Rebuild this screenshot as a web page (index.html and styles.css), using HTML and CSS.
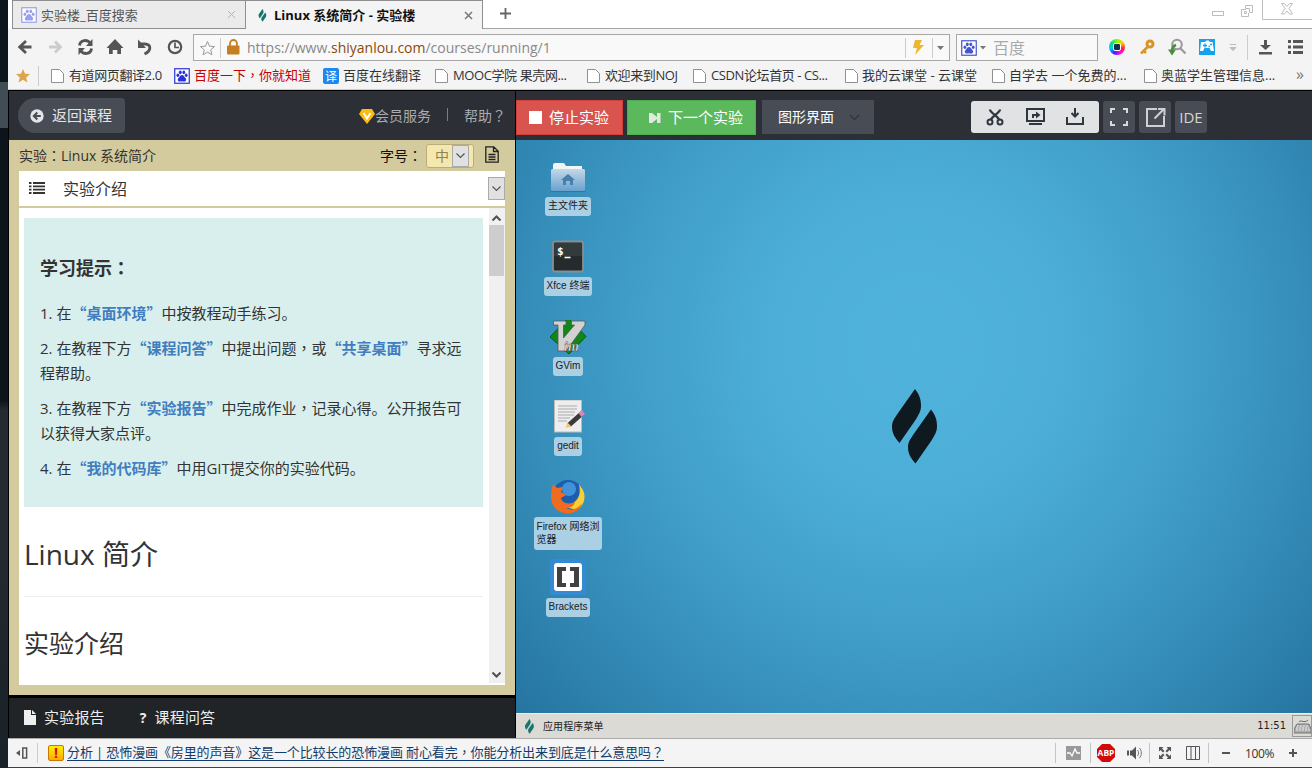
FILE: index.html
```
<!DOCTYPE html>
<html lang="zh-CN">
<head>
<meta charset="utf-8">
<title>Linux 系统简介 - 实验楼</title>
<link rel="stylesheet" href="styles.css">
</head>
<body>
<svg class="defs" width="0" height="0">
  <symbol id="paw" viewBox="0 0 16 16"><rect x=".75" y=".75" width="14.5" height="14.5" fill="#fff" stroke="currentColor" stroke-width="1.2"/><g fill="currentColor"><ellipse cx="3.9" cy="7.3" rx="1.4" ry="1.8"/><ellipse cx="6.3" cy="4.3" rx="1.4" ry="1.9"/><ellipse cx="9.8" cy="4.3" rx="1.4" ry="1.9"/><ellipse cx="12.2" cy="7.3" rx="1.4" ry="1.8"/><path d="M8 7c1.700 0 2.200 1.800 3.400 2.900 1.500 1.400.7 3.600-1.200 3.600-.9 0-1.300-.3-2.200-.3s-1.300.3-2.200.3c-1.900 0-2.700-2.200-1.200-3.600C5.800 8.800 6.300 7 8 7z"/></g></symbol>
  <symbol id="page" viewBox="0 0 13 14"><path d="M.5.500h8l4 4v9H.5z" fill="#fff" stroke="#8f8f8f"/></symbol>
  <symbol id="leaf" viewBox="0 0 46 76"><path id="blade" d="M23 0C27 5 29 10 29 17C29 22 27 25 23.500 31L7.500 54C3 49 0 44 0 38C0 33 1.500 31 5 25.500z"/><use href="#blade" x="16" y="20.500"/></symbol>
</svg>
<div class="screen">
  <div class="edge"></div>
  <div class="browser">
    <div class="tabs">
      <div class="tab"><svg class="i16 pale"><use href="#paw"/></svg><span class="tabname">实验楼_百度搜索</span><svg class="x" viewBox="0 0 9 9"><path d="M1 1l7 7M8 1L1 8" stroke="#b5b5b5"/></svg></div>
      <div class="tab active"><svg class="tleaf"><use href="#leaf"/></svg><b class="tabname">Linux 系统简介 - 实验楼</b><svg class="x" viewBox="0 0 9 9"><path d="M1 1l7 7M8 1L1 8" stroke="#777" stroke-width="1.500"/></svg></div>
      <div class="rest"><svg class="plus" viewBox="0 0 11 11"><path d="M5.500 0v11M0 5.500h11" stroke="#666" stroke-width="1.800"/></svg>
        <svg class="winbtns" viewBox="0 0 100 20"><g fill="none" stroke="#bdbdbd"><rect x=".5" y="11.500" width="11" height="4"/><path d="M34 9.500h-4.500v7h7V13M33.500 5.500h7v7h-3v-4h-4zM32.500 11.500h2v2h-2zM50.500 0v19.500H100"/><path d="M69.500 3.500h3l2.500 3 2.500-3h3L77 8.500l3.500 5.500h-3L75 11l-2.500 3h-3L73 8.500z"/></g></svg>
      </div>
    </div>
    <div class="nav">
      <svg class="navicons" viewBox="0 0 180 34" fill="none" stroke="#555" stroke-width="2.800"><path d="M11.500 20h12M18 14l-6.300 6 6.300 6"/><path d="M41 20h11M47 14.500l5.500 5.500-5.500 5.500" stroke="#ccc"/><path d="M71.500 18.500c.6-6 8-6.500 11-2M83.500 21.500c-.6 6-8 6.500-11 2" /><path d="M84.500 12v7H78zM70.500 28v-7H77z" fill="#555" stroke="none"/><path d="M107 12l8.500 9h-2.500v6h-3.700v-4h-4.600v4H101v-6h-2.500z" fill="#555" stroke="none"/><path d="M132 17h5c6.500 0 6.500 7-.5 10" stroke-width="2.900"/><path d="M130 12.500v8.500h8z" fill="#555" stroke="none"/><circle cx="167" cy="20" r="6.200" stroke-width="2.200"/><path d="M167 15.500v5h4" stroke-width="1.700"/></svg>
      <div class="url">
        <svg viewBox="0 0 50 26" class="urllead"><path d="M13.500 6.500l2 4.700 5 .4-3.800 3.300 1.200 4.900-4.400-2.600-4.400 2.600 1.200-4.900-3.800-3.300 5-.4z" fill="none" stroke="#999"/><path d="M26.500 3v20" stroke="#ccc"/><path d="M36 11V8.500a3.500 3.500 0 017 0V11" fill="none" stroke="#c67f20" stroke-width="1.800"/><rect x="33" y="10.500" width="12.500" height="9" rx="1" fill="#c67f20"/></svg>
        <span class="addr">https://www.<em>shiyanlou.com</em>/courses/running/1</span>
        <svg viewBox="0 0 44 26" class="urlend"><path d="M.5 3v20M27.500 3v20" stroke="#ccc"/><path d="M10 5h7l-2.500 5H19L10 20l2-7H8z" fill="#edb62e"/><path d="M32 11h7l-3.500 4z" fill="#777"/></svg>
      </div>
      <div class="search"><svg class="i16 blue"><use href="#paw"/></svg><svg class="caret" viewBox="0 0 7 4"><path d="M0 0h6L3 3.500z" fill="#777"/></svg><span>百度</span></div>
      <div class="wheel"><i></i></div>
      <svg class="tools" viewBox="0 0 180 34"><g transform="translate(8 11)"><circle cx="11" cy="5" r="3" fill="none" stroke="#dc9227" stroke-width="3"/><path d="M8.500 8L2 14.500M5 12l2 2" stroke="#dc9227" stroke-width="2.500"/></g><g fill="none"><circle cx="46" cy="16.500" r="4.800" stroke="#999" stroke-width="2"/><path d="M49 20l5.500 5.500" stroke="#999" stroke-width="2.300"/><path d="M45 17c-3 1-4 4-4 6" stroke="#478f38" stroke-width="2.600"/><path d="M37 21.500h8l-4 6z" fill="#478f38"/></g><rect x="68" y="11" width="16" height="16" fill="#15a2ed"/><path d="M71 14h3l1.500-1.500h2L79 14h2.500l1.500 9h-3l-1.500-3h-5L72 23h-3l1-9z" fill="#fff"/><path d="M72 17.500h4M74 15.500v4M79 16.500h2M77.500 18.500h1.500" stroke="#15a2ed" stroke-width="1.300"/><path d="M99 16.500h6M99 19.500h6l-3 3z" stroke="#bbb" fill="#bbb"/><path d="M116.500 7v25" stroke="#ccc"/><g transform="translate(127 12)" fill="#555"><path d="M6 0h3v5h4l-5.500 5L2 5h4zM1 12h13v2.500H1z"/></g><path d="M157 13.500h3m2 0h10M157 19h3m2 0h10M157 24.500h3m2 0h10" stroke="#555" stroke-width="2.800"/></svg>
    </div>
    <div class="marks">
      <svg class="fav" viewBox="0 0 14 14"><path d="M7 0l2 4.700 5 .4-3.800 3.300 1.200 5L7 10.800l-4.400 2.600 1.200-5L0 5.100l5-.4z" fill="#dda54b"/></svg><i class="sep"></i>
      <div class="bm" style="width:123px"><svg class="pg"><use href="#page"/></svg><span class="tight">有道网页翻译2.0</span></div>
      <div class="bm red" style="width:149px"><svg class="i16 paw2"><use href="#paw"/></svg><span>百度一下<u>，</u>你就知道</span></div>
      <div class="bm" style="width:112px"><b class="yi">译</b><span>百度在线翻译</span></div>
      <div class="bm" style="width:152px"><svg class="pg"><use href="#page"/></svg><span class="tight">MOOC学院 果壳网...</span></div>
      <div class="bm" style="width:106px"><svg class="pg"><use href="#page"/></svg><span class="tight">欢迎来到NOJ</span></div>
      <div class="bm" style="width:152px"><svg class="pg"><use href="#page"/></svg><span class="tight">CSDN论坛首页 - CS...</span></div>
      <div class="bm" style="width:147px"><svg class="pg"><use href="#page"/></svg><span>我的云课堂 - 云课堂</span></div>
      <div class="bm" style="width:152px"><svg class="pg"><use href="#page"/></svg><span>自学去 一个免费的...</span></div>
      <div class="bm" style="width:151px"><svg class="pg"><use href="#page"/></svg><span>奥蓝学生管理信息...</span></div>
      <span class="more">»</span>
    </div>
    <div class="app">
      <div class="left">
        <div class="head">
          <div class="back"><svg viewBox="0 0 14 14"><circle cx="7" cy="7" r="6.700" fill="#e4e5e6"/><path d="M10.800 7H4M7.300 3.500L3.800 7l3.500 3.500" fill="none" stroke="#484d55" stroke-width="2"/></svg><span>返回课程</span></div>
          <div class="links"><svg viewBox="0 0 16 15"><path d="M3 0h10l3 5-8 10L0 5z" fill="#fdbb12"/><path d="M4.500 4L8 9.500 11.500 4" fill="none" stroke="#fff" stroke-width="2"/></svg><span>会员服务</span><i></i><span>帮助<u>？</u></span></div>
        </div>
        <div class="lesson">
          <div class="title"><span>实验<u>：</u>Linux 系统简介</span><span class="fs">字号<u>：</u></span><div class="size"><span>中</span><i class="drop"><svg viewBox="0 0 9 6"><path d="M.5.500l4 4 4-4" fill="none" stroke="#555" stroke-width="1.200"/></svg></i></div><svg class="doc" viewBox="0 0 14 17"><path d="M.8.800h8l4.400 4.400v11H.8zM8.500 1v4.500H13M3.500 8.500h7M3.500 11h7M3.500 13.500h7" fill="none" stroke="#222" stroke-width="1.300"/></svg></div>
          <div class="section"><svg class="list" viewBox="0 0 16 12"><path d="M0 1h2.500M4 1h12M0 4.300h2.500M4 4.300h12M0 7.600h2.500M4 7.600h12M0 11h2.500M4 11h12" stroke="#333" stroke-width="1.800"/></svg><span>实验介绍</span><i class="drop big"><svg viewBox="0 0 9 6"><path d="M.5.500l4 4 4-4" fill="none" stroke="#555" stroke-width="1.200"/></svg></i></div>
          <div class="doc-body">
            <div class="article">
              <div class="tips">
                <h4>学习提示<u>：</u></h4>
                <p>1. 在<b>“桌面环境”</b>中按教程动手练习。</p>
                <p>2. 在教程下方<b>“课程问答”</b>中提出问题<u>，</u>或<b>“共享桌面”</b>寻求远<br>程帮助。</p>
                <p>3. 在教程下方<b>“实验报告”</b>中完成作业<u>，</u>记录心得。公开报告可<br>以获得大家点评。</p>
                <p>4. 在<b>“我的代码库”</b>中用GIT提交你的实验代码。</p>
              </div>
              <h1>Linux 简介</h1>
              <h2>实验介绍</h2>
            </div>
            <div class="scroll"><svg viewBox="0 0 9 6"><path d="M.5 5.500l4-4 4 4" fill="none" stroke="#505050" stroke-width="2"/></svg><i></i><svg viewBox="0 0 9 6"><path d="M.5.500l4 4 4-4" fill="none" stroke="#505050" stroke-width="2"/></svg></div>
          </div>
        </div>
        <div class="foot"><svg viewBox="0 0 12 15"><path d="M0 0h7v5h5v10H0zM8 0l4 4H8z" fill="#eee"/></svg><span class="f1">实验报告</span><b>?</b><span>课程问答</span></div>
      </div>
      <div class="right">
        <div class="head">
          <div class="btn stop"><i></i><span>停止实验</span></div>
          <div class="btn next"><svg viewBox="0 0 12 12"><path d="M0 1h3l5 4V1h3.500v10H8V7l-5 4H0z" fill="#dfe9df"/></svg><span>下一个实验</span></div>
          <div class="btn ui"><span>图形界面</span><svg viewBox="0 0 11 7"><path d="M1 1l4.500 4.500L10 1" fill="none" stroke="#30343b" stroke-width="1.300"/></svg></div>
          <svg class="trio" viewBox="0 0 128 32" fill="none" stroke="#30363f" stroke-width="2"><g><path d="M19 8.500c0 3 7 6 9 10M29 8.500c0 3-7 6-9 10" stroke-width="2.300"/><circle cx="19" cy="21" r="2.500"/><circle cx="29" cy="21" r="2.500"/></g><rect x="56" y="8" width="17" height="12"/><path d="M58 23h13M62 17v-3h4"/><path d="M65 10.500v7l4.500-3.500z" fill="#30363f" stroke="none"/><path d="M96 16v7h16v-7M104 7v9M100.500 12l3.500 3.500 3.500-3.500"/></svg>
          <svg class="sq" viewBox="0 0 32 32" fill="none" stroke="#d8d9da" stroke-width="2"><path d="M8 12V8h4M20 8h4v4M24 20v4h-4M12 24H8v-4"/></svg>
          <svg class="sq" viewBox="0 0 32 32" fill="none" stroke="#cfd0d1" stroke-width="2"><path d="M18 8H8v17h17V15M15.500 17.500L25 8M19 8h6.500v6.500"/></svg>
          <div class="ide">IDE</div>
        </div>
        <div class="desktop">
          <div class="icons">
            <div class="it"><svg viewBox="0 0 38 36"><path d="M4 16V5q0-2 2-2h9l2 3h16v10z" fill="#f1f5f7"/><rect x="2" y="9" width="34" height="22" rx="1.500" fill="url(#fold)"/><path d="M2 31.500h34" stroke="#426f94"/><path d="M19 14l7 6h-2v5h-3v-4h-4v4h-3v-5h-2z" fill="#477fad"/><defs><linearGradient id="fold" x2="0" y2="1"><stop stop-color="#c4d8e7"/><stop offset="1" stop-color="#69a2cf"/></linearGradient></defs></svg><span>主文件夹</span></div>
            <div class="it"><svg viewBox="0 0 38 36"><rect x="4" y="1.500" width="30" height="30" rx="2" fill="#252a2c" stroke="#8a8e8f" stroke-width="1.800"/><path d="M5 3h28v13H5z" fill="#333a3c"/><text x="8" y="15" class="term">$</text><path d="M15.500 17.500h6" stroke="#fff" stroke-width="1.600"/></svg><span>Xfce 终端</span></div>
            <div class="it"><svg viewBox="0 0 38 36"><path d="M19-2l18 18.500L20 34 1 17z" fill="#118719" stroke="#075b12"/><path d="M4.500 1H17v4h-2.500v13L25.500 5H22.500V1H36v4L17 31H9V5H4.500z" fill="#d2d2d2" stroke="#555" stroke-width=".8"/><text x="15" y="31" class="vim">im</text></svg><span>GVim</span></div>
            <div class="it"><svg viewBox="0 0 38 36"><rect x="5.500" y="0" width="27" height="32" fill="#eee" stroke="#bbb"/><path d="M9 6h19M9 9h19M9 12h17M9 15h16M9 18h12M9 21h9" stroke="#aaa"/><path d="M20 25l14-12.500" stroke="#3b3b3b" stroke-width="5"/><path d="M16.500 28l2-5.500 4 4z" fill="#f1c66f"/><path d="M31 15l3.500-3" stroke="#d887b3" stroke-width="5"/></svg><span>gedit</span></div>
            <div class="it"><svg viewBox="0 0 38 36"><circle cx="19" cy="16" r="16" fill="#1d5dad"/><circle cx="20" cy="9" r="7" fill="#4093d8"/><path d="M30 4c2 10 0 15-6 19l-8 4 12 3c8-5 9-14 6-20z" fill="#f9cf36"/><path d="M3 8L4 4l4 4 6-1-2 5 5 3-5 3c1 5 7 7 14 4-1 5-6 6-9 6 6 3 12 1 16-5-2 7-8 10.500-14 10.500C8 33.500 2 25 2 17c0-4 0-6 1-9z" fill="#ee6b20"/></svg><span class="two">Firefox 网络浏<br>览器</span></div>
            <div class="it last"><svg viewBox="0 0 38 36"><rect x="1" y="0" width="36" height="36" rx="3" fill="#348bd4"/><rect x="5" y="4" width="28" height="28" rx="3" fill="#fff"/><path d="M17 8H8v20h9v-4h-4V12h4zM21 8h9v20h-9v-4h4V12h-4z" fill="#414141"/></svg><span>Brackets</span></div>
          </div>
          <svg class="logo"><use href="#leaf"/></svg>
        </div>
        <div class="taskbar"><svg><use href="#leaf"/></svg><span>应用程序菜单</span><time>11:51</time><div class="kb"><svg viewBox="0 0 17 15"><path d="M5 3c2-3 5 2 9-2" fill="none" stroke="#666"/><path d="M3 5h12l2 5v4H0v-4z" fill="#aaa" stroke="#777"/><path d="M3 7h12M2 9h13M2 11h14" stroke="#eee" stroke-dasharray="2 1"/></svg></div></div>
      </div>
    </div>
    <div class="status">
      <svg class="side" viewBox="0 0 12 12"><path d="M0 6l4-3v6z" fill="#555"/><rect x="6.800" y="1" width="3.800" height="10" fill="none" stroke="#555" stroke-width="1.500"/></svg><i class="sep"></i>
      <b class="warn">!</b><a>分析 | 恐怖漫画《房里的声音》这是一个比较长的恐怖漫画 耐心看完<u>，</u>你能分析出来到底是什么意思吗<u>？</u></a>
      <svg class="sticons" viewBox="0 0 190 28"><path d="M.5 4v20M35.500 4v20M94.500 4v20M153.500 4v20" stroke="#c4c4c4"/><rect x="11" y="7" width="15" height="14" fill="#999"/><path d="M12 14h3l2 3 3-7 2 4h3" fill="none" stroke="#fff" stroke-width="1.300"/><path d="M47 5h8l5 5v8l-5 5h-8l-5-5v-8z" fill="#d10b0b"/><text x="42.600" y="17" textLength="16.800" lengthAdjust="spacingAndGlyphs" class="abp">ABP</text><path d="M72 11.500h2v5h-2zM75 11.500h2l4-4v13l-4-4h-2z" fill="#555"/><path d="M82.500 11c1.500 2 1.500 4 0 6M84.500 9c2.500 3 2.500 7 0 10" fill="none" stroke="#777"/><path d="M104 8h4.500l-1.500 1.500 2.500 2.500-1.500 1.500-2.500-2.500-1.500 1.500zM116 8h-4.500l1.500 1.500-2.500 2.500 1.500 1.500 2.500-2.500 1.500 1.500zM104 20h4.500l-1.500-1.500 2.500-2.500-1.500-1.500-2.500 2.500-1.500-1.500zM116 20h-4.500l1.500-1.500-2.500-2.500 1.500-1.500 2.500 2.500 1.500-1.500z" fill="#555"/><path d="M131.500 7.500h13v13h-13zM136 8v12M140.500 8v12" fill="none" stroke="#555"/><path d="M167 14h8" stroke="#555" stroke-width="2"/></svg>
      <span class="zoom">100%</span><svg class="zp" viewBox="0 0 8 8"><path d="M4 0v8M0 4h8" stroke="#555" stroke-width="2"/></svg>
    </div>
  </div>
</div>
</body>
</html>
```
FILE: styles.css
```
* { box-sizing: border-box; }
body { margin: 0; overflow: hidden; font-family: "Open Sans", "Noto Sans CJK SC", sans-serif; color: #333; }
svg { display: block; flex: none; }
u { text-decoration: none; font-family: "Noto Sans CJK TC", sans-serif; font-feature-settings: "locl" 0; -webkit-locale: "zh-TW"; line-height: 0; }
.defs { position: absolute; }
.screen { display: flex; width: 1312px; height: 768px; background: #2a465f; }
.edge { width: 8px; background: linear-gradient(#0c161c 0 82px, #414d54 82px 128px, #0b151b 128px 400px, #232b31 410px 540px, #182127); }
.browser { width: 1304px; height: 767px; display: flex; flex-direction: column; background: #f4f4f4; white-space: nowrap; }
.i16 { width: 16px; height: 16px; }
.pale { color: #9ba0ed; }
.blue { color: #4355cf; }
.paw2 { color: #2932e1; }

.tabs { display: flex; height: 29px; background: #fff; }
.tab { display: flex; align-items: center; border: 1px solid #8f8f8f; border-left: 0; background: #ebebeb; font-size: 13px; width: 238px; padding: 0 9px 0 13px; color: #555; }
.tab:first-child { border-left: 1px solid #8f8f8f; margin-left: 4px; width: 234px; padding-left: 8px; }
.tab .tabname { flex: 1; margin: -1px 0 0 4px; }
.tab.active { background: #f4f4f4; border-bottom: 0; color: #111; width: 237px; padding-left: 11px; }
.tab.active .tabname { margin-left: 6px; letter-spacing: 0; }
.tleaf { width: 11px; height: 13px; fill: #18766e; }
.x { width: 9px; height: 9px; }
.rest { flex: 1; display: flex; justify-content: space-between; border-bottom: 1px solid #a5a5a5; }
.plus { width: 11px; height: 11px; margin: 8px 0 0 17px; }
.winbtns { width: 100px; height: 20px; }

.nav { display: flex; height: 34px; padding-top: 5px; }
.navicons { width: 180px; height: 34px; margin: -7px 5px 0 0; }
.url { display: flex; align-items: center; width: 757px; height: 27px; border: 1px solid #a8a8a8; background: #f9f9f9; }
.urllead { width: 50px; height: 26px; }
.addr { flex: 1; font-size: 14px; color: #888; margin: -1px 0 0 3px; }
.addr em { font-style: normal; color: #8a4a0c; }
.urlend { width: 44px; height: 26px; }
.search { display: flex; align-items: center; width: 142px; height: 27px; margin-left: 6px; padding-left: 4px; border: 1px solid #a8a8a8; background: #f9f9f9; color: #aaa; font-size: 16px; }
.search span { margin-top: -2px; }
.caret { width: 7px; height: 4px; margin: 0 6px 0 3px; }
.wheel { width: 16px; height: 16px; border-radius: 50%; margin: 5px 0 0 11px; padding: 4px; background: conic-gradient(#80ff00, #ffd000, #ff2040, #f0f, #4020ff, #0cf, #00e080, #80ff00); }
.wheel i { display: block; width: 8px; height: 8px; background: #183048; border: 1px solid #fff; border-radius: 2px; }
.tools { width: 180px; height: 34px; margin: -6px 0 0 6px; }

.marks { display: flex; align-items: center; height: 27px; padding-left: 8px; font-size: 13px; color: #333; border-bottom: 1px solid #c9c9c9; }
.fav { width: 14px; height: 14px; }
.sep { width: 1px; height: 20px; background: #ccc; margin: 0 12px 0 8px; }
.bm { display: flex; align-items: center; flex: none; gap: 5px; }
.bm span { margin: -3px 0 0 -1px; }
.pg { width: 13px; height: 14px; }
.bm .tight { letter-spacing: -.4px; margin-left: 0; }
.red { color: #c80000; }
.yi { width: 16px; height: 16px; background: #1e88f0; color: #fff; border-radius: 2px; font: 12px/16px "Noto Sans CJK SC", sans-serif; text-align: center; }
.more { font-size: 16px; color: #777; margin: -4px 0 0 1px; }

.app { display: flex; height: 648px; border-top: 1px solid #000; border-left: 1px solid #000; }
.left { width: 507px; display: flex; flex-direction: column; border-right: 1px solid #000; }
.right { width: 796px; display: flex; flex-direction: column; }
.head { display: flex; height: 49px; background: #2c2f36; flex: none; }
.left .head { justify-content: space-between; padding: 7px 9px 0 9px; width: 506px; }
.back { display: flex; align-items: center; width: 107px; height: 35px; background: #484d55; border-radius: 18px 4px 4px 18px; padding-left: 12px; font-size: 15px; color: #e4e5e6; }
.back svg { width: 14px; height: 14px; margin-right: 8px; }
.back span, .links span, .btn span { margin-top: -3px; }
.links { display: flex; align-items: center; height: 37px; color: #aaacae; font-size: 14px; }
.links svg { width: 16px; height: 15px; }
.links i { width: 1px; height: 13px; background: #b0608c; margin: -4px 16px 0; }

.lesson { height: 555px; width: 506px; background: #d3cb9d; padding: 0 10px 10px; }
.title { display: flex; align-items: center; height: 31px; font-size: 14px; }
.title span { margin-top: -2px; }
.title .fs { margin-left: auto; margin-right: 4px; color: #111; }
.size { display: flex; align-items: center; width: 48px; height: 24px; padding: 0 4px 0 8px; background: #f4e8ae; border: 1px solid #b9ae7b; border-radius: 3px; color: #8e8457; }
.size span { flex: 1; }
.drop { display: flex; align-items: center; justify-content: center; width: 17px; height: 22px; background: #e1e1e1; border: 1px solid #aaa; }
.drop svg { width: 9px; height: 6px; }
.doc { width: 14px; height: 17px; margin: -3px 6px 0 11px; }
.section { display: flex; align-items: center; height: 35px; background: #fff; padding-left: 10px; font-size: 16px; }
.section span { margin-top: -2px; }
.list { width: 16px; height: 12px; margin: -2px 18px 0 0; }
.drop.big { width: 17px; height: 23px; margin-left: auto; }
.doc-body { display: flex; height: 477px; margin-top: 2px; background: #fff; overflow: hidden; }
.article { width: 470px; padding: 10px 6px 0 5px; }
.tips { height: 289px; background: #d9efed; padding: 38px 16px 0; font-size: 15px; line-height: 25px; }
.tips h4 { font-size: 18px; line-height: 25px; height: 25px; margin: 0 0 20px; }
.tips p { margin: 0 0 10px; }
.tips b { color: #417dbf; font-family: "Noto Sans CJK SC", sans-serif; line-height: 0; }
h1 { font-size: 28px; font-weight: 400; line-height: 40px; margin: 27px 0 0; padding-bottom: 22px; border-bottom: 1px solid #eee; }
h2 { font-size: 25px; font-weight: 400; line-height: 40px; margin: 26px 0 0; }
.scroll { width: 16px; background: #f0f0f0; display: flex; flex-direction: column; align-items: center; padding: 7px 1px 5px 0; height: 475px; }
.scroll svg { width: 9px; height: 6px; }
.scroll i { width: 15px; height: 51px; background: #cdcdcd; margin: 4px 0 auto; }
.foot { display: flex; align-items: center; height: 43px; width: 506px; background: #202427; border-top: 3px solid #000; padding: 0 0 2px 15px; color: #eee; font-size: 15px; flex: none; }
.foot svg { width: 12px; height: 15px; margin-right: 8px; }
.foot span { margin-top: -2px; letter-spacing: .2px; }
.foot .f1 { margin-right: 35px; }
.foot b { margin-right: 8px; font-size: 14px; }

.right .head { padding-top: 9px; }
.btn { display: flex; align-items: center; height: 35px; color: #fff; font-size: 15px; flex: none; }
.stop { width: 107px; background: #d9534f; border: 1px solid #d43f3a; padding-left: 12px; }
.stop i { width: 13px; height: 13px; background: #fff; margin-right: 7px; }
.next { width: 129px; margin-left: 4px; background: #5cb85c; border: 1px solid #4cae4c; padding-left: 21px; }
.next svg { width: 12px; height: 12px; margin-right: 7px; }
.ui { width: 112px; height: 34px; margin-left: 6px; background: #484d55; padding-left: 16px; font-size: 14px; }
.ui svg { width: 11px; height: 7px; margin-left: 15px; }
.trio { width: 128px; height: 32px; margin: 1px 4px 0 97px; background: #e1e2e4; border-radius: 3px; }
.sq, .ide { width: 32px; height: 32px; margin: 1px 4px 0 0; background: #484d55; border-radius: 3px; }
.ide { color: #d4d5d6; font-size: 15px; line-height: 33px; text-align: center; }
.desktop { position: relative; height: 573px; background: radial-gradient(ellipse 570px 590px at 400px 205px, #50b3dc 0, #4dafd8 25%, #3f9cc7 52%, #2e82ae 80%, #236e9b 100%); }
.icons { width: 104px; padding-top: 21px; }
.it { height: 80px; display: flex; flex-direction: column; align-items: center; }
.it svg { width: 38px; height: 36px; margin-top: -1px; margin-bottom: 1px; }
.it.last svg { margin-top: -2px; margin-bottom: 3px; }
.it span { height: 19px; padding: 0 3px; border-radius: 3px; background: #abcfe3; color: #17212a; font: 10px/18px "Liberation Sans", "Noto Sans CJK SC", sans-serif; }
.it .two { height: 33px; line-height: 13px; padding-top: 3px; letter-spacing: -.05px; }
.term { font: bold 11px "DejaVu Sans Mono", monospace; fill: #fff; }
.vim { font: italic bold 14px "Liberation Serif", serif; fill: #e4e4e4; stroke: #444; stroke-width: .4px; }
.logo { position: absolute; left: 376px; top: 249px; width: 46px; height: 76px; fill: #0e1a20; }
.taskbar { display: flex; align-items: center; height: 25px; background: #dbdad5; border-top: 1px solid #eee; font: 10px "Liberation Sans", "Noto Sans CJK SC", sans-serif; color: #222; }
.taskbar > svg { width: 11px; height: 15px; fill: #18766e; margin: 0 8px 0 8px; }
.taskbar span { margin-top: -2px; letter-spacing: .1px; }
.taskbar time { margin: -2px 0 0 auto; font: 10px "DejaVu Sans", sans-serif; }
.kb { width: 20px; height: 22px; margin-left: 6px; border: 1px solid #999; padding: 3px 1px; }
.kb svg { width: 17px; height: 15px; }

.status { display: flex; align-items: center; height: 29px; border-top: 1px solid #aaa; padding-left: 8px; font-size: 13px; }
.side { width: 12px; height: 12px; }
.status .sep { margin: 0 10px 0 9px; }
.warn { width: 16px; height: 16px; border: 1px solid #c47800; border-radius: 2px; background: linear-gradient(#fff200, #ffa800); color: #d01010; font-size: 14px; line-height: 14px; text-align: center; margin-right: 3px; }
.status a { color: #123c6b; border-bottom: 1px solid #123c6b; line-height: 15px; height: 16px; margin-top: -1px; letter-spacing: -.11px; }
.sticons { width: 190px; height: 28px; margin-left: auto; }
.abp { font: bold 9px "Open Sans", sans-serif; fill: #fff; }
.zoom { width: 44px; font-size: 12px; letter-spacing: -.4px; }
.zp { width: 8px; height: 8px; margin-right: 15px; }
```
